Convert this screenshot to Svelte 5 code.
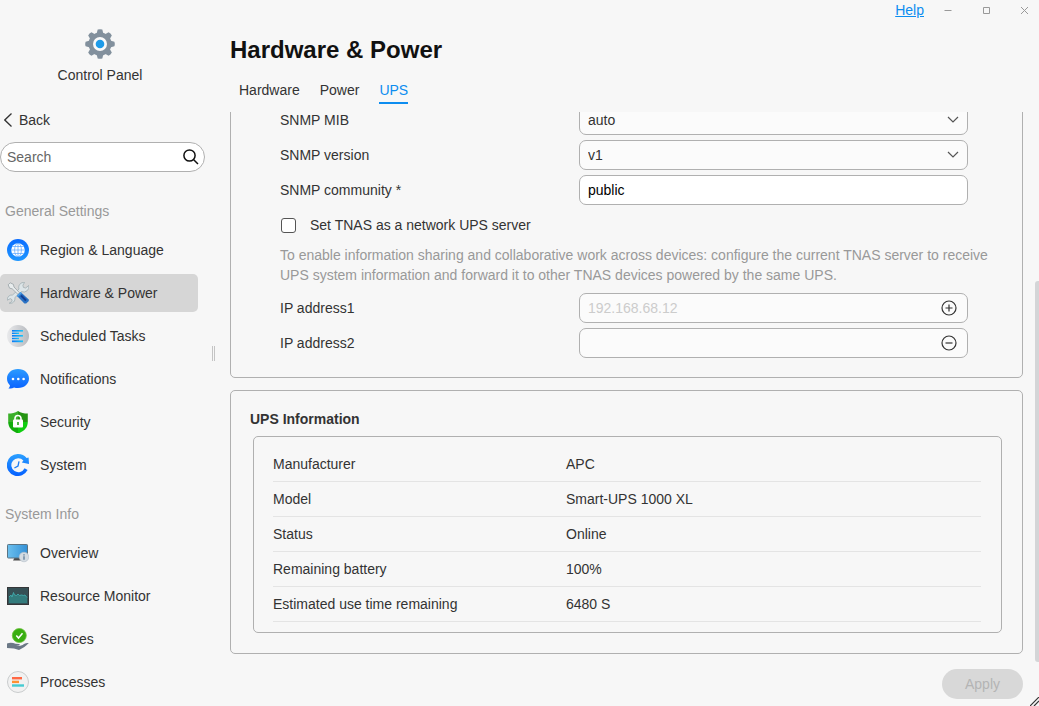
<script>
  let search = $state('')
  let activeItem = $state('Hardware & Power')
  let activeTab = $state('UPS')

  let mib = $state('auto')
  let version = $state('v1')
  let community = $state('public')
  let isServer = $state(false)
  let addresses = $state(['', ''])

  const tabs = ['Hardware', 'Power', 'UPS']

  const groups = [
    {
      title: 'General Settings',
      items: [
        { name: 'Region & Language', icon: globe },
        { name: 'Hardware & Power', icon: tools },
        { name: 'Scheduled Tasks', icon: tasks },
        { name: 'Notifications', icon: bubble },
        { name: 'Security', icon: shield },
        { name: 'System', icon: clock },
      ],
    },
    {
      title: 'System Info',
      items: [
        { name: 'Overview', icon: monitor },
        { name: 'Resource Monitor', icon: chart },
        { name: 'Services', icon: hand },
        { name: 'Processes', icon: processes },
      ],
    },
  ]

  const upsInfo = [
    ['Manufacturer', 'APC'],
    ['Model', 'Smart-UPS 1000 XL'],
    ['Status', 'Online'],
    ['Remaining battery', '100%'],
    ['Estimated use time remaining', '6480 S'],
  ]

  function addAddress() {
    addresses.push('')
  }

  function removeAddress(i) {
    addresses.splice(i, 1)
  }
</script>

{#snippet globe()}
  <svg viewBox="0 0 22 22">
    <defs>
      <linearGradient id="globeBg" x1="0" y1="0" x2="0" y2="1">
        <stop offset="0" stop-color="#0a6cff" />
        <stop offset="1" stop-color="#1f97ff" />
      </linearGradient>
    </defs>
    <circle cx="11" cy="11" r="11" fill="url(#globeBg)" />
    <circle cx="11" cy="11" r="6.8" fill="#fff" />
    <g fill="none" stroke="#5aa5ff" stroke-width="0.7">
      <ellipse cx="11" cy="11" rx="3.4" ry="6.8" />
      <path d="M11 4.200v13.600M4.200 11h13.600M5.200 7.500h11.600M5.200 14.500h11.600" />
    </g>
  </svg>
{/snippet}

{#snippet tools()}
  <svg viewBox="0 0 22 22">
    <path d="M17.5 0.5a5 5 0 0 0-5.500 6.600l-6.500 5.900a4.600 4.600 0 0 0-5.200 5.200l3-1.600 1.800 1.200-.2 1.800-2.700 1.600a4.600 4.600 0 0 0 5.600-5.600l6.700-6a5.300 5.300 0 0 0 7.300-6.100l-3.200 2.500-2.200-.6-.5-2.200z" fill="#dde5e8" stroke="#9aa8ac" stroke-width="0.7" />
    <path d="M1.200 2.800l2-2 3.200 1.600.6 2.600 5.600 5.800-1.600 1.600-5.800-5.600-2.600-.6z" fill="#e8eced" stroke="#8f999d" stroke-width="0.7" />
    <path d="M9.800 13.800l3.800-3.800 8.200 7.400v1.600l-2.600 2.600h-1.800z" fill="#2a72c4" />
    <path d="M14 13.500l5 5" stroke="#123c91" stroke-width="2" />
    <path d="M9.800 13.800l3.800-3.800 1.200 1-3.900 4z" fill="#4ea1e8" />
  </svg>
{/snippet}

{#snippet tasks()}
  <svg viewBox="0 0 22 22">
    <defs>
      <linearGradient id="taskBg">
        <stop offset="0" stop-color="#e9eaec" />
        <stop offset="1" stop-color="#b7babf" />
      </linearGradient>
      <linearGradient id="taskLine">
        <stop offset="0" stop-color="#0b78f5" />
        <stop offset="1" stop-color="#19c6fa" />
      </linearGradient>
    </defs>
    <circle cx="11" cy="11" r="11" fill="url(#taskBg)" />
    <g fill="url(#taskLine)">
      <rect x="5" y="5" width="11" height="1.6" />
      <rect x="5" y="7.6" width="7" height="1.4" />
      <rect x="5" y="10" width="11" height="1.6" />
      <rect x="5" y="12.8" width="7" height="1.4" />
      <rect x="5" y="15.4" width="11" height="1.8" />
    </g>
  </svg>
{/snippet}

{#snippet bubble()}
  <svg viewBox="0 0 22 22">
    <defs>
      <linearGradient id="bubbleBg" x1="0" y1="0" x2="0" y2="1">
        <stop offset="0" stop-color="#2b9bff" />
        <stop offset="1" stop-color="#0a63ff" />
      </linearGradient>
    </defs>
    <path d="M11 1c6.5 0 11 4.2 11 9.500s-4.500 9.500-11 9.500c-1.500 0-2.700-.1-4-.5-1.500.9-3.600 1.300-5.600 1 1-.8 1.500-1.900 1.500-3.200C1 15.500 0 13.200 0 10.500 0 5.200 4.500 1 11 1z" fill="url(#bubbleBg)" />
    <g fill="#fff">
      <circle cx="6" cy="11" r="1.3" />
      <circle cx="11.3" cy="11" r="1.3" />
      <circle cx="16.6" cy="11" r="1.3" />
    </g>
  </svg>
{/snippet}

{#snippet shield()}
  <svg viewBox="0 0 22 22">
    <path d="M11 0c3 2 6 2.600 9.800 2.600V11H11z" fill="#259412" />
    <path d="M11 0C8 2 5 2.600 1.200 2.600V11H11z" fill="#3bb02a" />
    <path d="M1.200 11H11v11.500C5 20.500 1.200 16.500 1.200 11z" fill="#12ad0c" />
    <path d="M20.800 11H11v11.500c6-2 9.800-6 9.800-11.500z" fill="#10ce10" />
    <rect x="6" y="8.6" width="10" height="7.8" rx="1" fill="#fff" />
    <path d="M8 9V7.500a3 3 0 0 1 6 0V9" fill="none" stroke="#fff" stroke-width="1.6" />
    <path d="M11 11v3" stroke="#2aa51c" stroke-width="1.6" />
  </svg>
{/snippet}

{#snippet clock()}
  <svg viewBox="0 0 22 22">
    <defs>
      <linearGradient id="clockBg" x1="0" y1="0" x2="0" y2="1">
        <stop offset="0" stop-color="#2ba0ff" />
        <stop offset="1" stop-color="#0560ff" />
      </linearGradient>
    </defs>
    <path d="M11 0c3.600 0 6.600 1.500 8.600 4l2-.6.4 6.600-7.200-1.600 1.600-2A7 7 0 1 0 17.600 14.300l3 1.700A11 11 0 1 1 11 0z" fill="url(#clockBg)" />
    <path d="M12 7.400l-1 4.600-3.600 2" fill="none" stroke="#1c7df5" stroke-width="1.3" />
  </svg>
{/snippet}

{#snippet monitor()}
  <svg viewBox="0 0 22 22">
    <defs>
      <linearGradient id="screenBg">
        <stop offset="0" stop-color="#6cc0ee" />
        <stop offset="1" stop-color="#3390d6" />
      </linearGradient>
    </defs>
    <path d="M8 15h6l.5 3.500H6z" fill="#4b4b4b" />
    <rect x="0.5" y="2.5" width="20" height="13.500" rx="0.8" fill="url(#screenBg)" stroke="#5b7382" />
    <circle cx="17" cy="15" r="4.8" fill="#d5dce2" stroke="#b3bdc7" stroke-width="0.6" />
    <path d="M17 12.300v1.200M17 14.200v3.600" stroke="#5d7b98" stroke-width="1.3" />
  </svg>
{/snippet}

{#snippet chart()}
  <svg viewBox="0 0 22 22">
    <rect x="0.5" y="2.5" width="21" height="17" fill="#365055" stroke="#353638" />
    <path d="M2 12l2-2 1 2 1.500-4.500 1 2.500 2 .5 1.500-1.500 1.500 1.500 2-.5 2 .5 1.500-.5 2 2.500V18H2z" fill="#337b7c" />
    <path d="M2 12l2-2 1 2 1.500-4.500 1 2.500 2 .5 1.500-1.500 1.500 1.500 2-.5 2 .5 1.500-.5 2 2.500" fill="none" stroke="#43b3b4" stroke-width="0.8" />
  </svg>
{/snippet}

{#snippet hand()}
  <svg viewBox="0 0 22 22">
    <path d="M0 15.500c3-1.200 6-.8 8.500.3l3.500.2c1 .2 1 1.200 0 1.500L9 18c3 .4 6-.4 8-2 1.500-1 3.500-1.300 4.800-1-2.500 3-6 5.200-9.800 7l-5-1.600L0 20z" fill="#6b7886" />
    <circle cx="12.300" cy="7.500" r="7" fill="#38ae10" stroke="#6dc13d" stroke-width="0.8" />
    <path d="M9.300 7.500l2.200 2.500 4-4.700" fill="none" stroke="#fff" stroke-width="1.5" />
  </svg>
{/snippet}

{#snippet processes()}
  <svg viewBox="0 0 22 22">
    <circle cx="11" cy="11" r="10.500" fill="#f1f1f1" stroke="#c9cccd" />
    <rect x="5" y="6" width="10" height="2.4" fill="#ff6844" />
    <rect x="5" y="9.700" width="7" height="2.4" fill="#ff9131" />
    <rect x="5" y="13.300" width="12" height="2.4" fill="#45cbd2" />
  </svg>
{/snippet}

<div class="window">
  <aside>
    <div class="app">
      <svg class="gear" viewBox="0 0 30 30">
        <g fill="#82909d">
          <circle cx="15" cy="15" r="11.5" />
          {#each [0, 45, 90, 135, 180, 225, 270, 315] as angle}
            <path d="M11.5 5l1.200-4.400q2.300-.8 4.600 0L18.500 5z" transform="rotate({angle} 15 15)" />
          {/each}
        </g>
        <circle cx="15" cy="15" r="7" fill="#fafafa" />
        <circle cx="15" cy="15" r="4.3" fill="#1e9be9" />
      </svg>
      <span>Control Panel</span>
    </div>

    <button type="button" class="back">
      <svg viewBox="0 0 8 14"><path d="M7.500 0.500L0.800 7l6.700 6.500" /></svg>
      Back
    </button>

    <div class="search">
      <input type="text" aria-label="Search" placeholder="Search" bind:value={search} />
      <button type="button" aria-label="Find">
        <svg viewBox="0 0 16 16"><circle cx="6.5" cy="6.5" r="5.6" /><path d="M10.500 10.500l4.500 4.500" /></svg>
      </button>
    </div>

    <nav>
      {#each groups as group}
        <h2>{group.title}</h2>
        <ul>
          {#each group.items as item}
            <li>
              <button type="button" class:active={activeItem === item.name} onclick={() => (activeItem = item.name)}>
                {@render item.icon()}
                {item.name}
              </button>
            </li>
          {/each}
        </ul>
      {/each}
    </nav>
  </aside>

  <div class="splitter"></div>

  <main>
    <div class="titlebar">
      <a href="#help">Help</a>
      <button type="button" aria-label="Minimize"><svg viewBox="0 0 10 10"><path d="M1.500 5.500h7" /></svg></button>
      <button type="button" aria-label="Maximize"><svg viewBox="0 0 10 10"><path d="M2.500 2.500h6v6h-6z" /></svg></button>
      <button type="button" aria-label="Close"><svg viewBox="0 0 10 10"><path d="M2 2l7 7M9 2l-7 7" /></svg></button>
    </div>

    <h1>Hardware &amp; Power</h1>

    <div class="tabs">
      {#each tabs as tab}
        <button type="button" class:active={activeTab === tab} onclick={() => (activeTab = tab)}>{tab}</button>
      {/each}
    </div>

    <div class="scroll">
      <section class="card form">
        <div class="row">
          <label for="mib">SNMP MIB</label>
          <div class="field">
            <select id="mib" bind:value={mib}>
              <option>auto</option>
            </select>
            <svg class="arrow" viewBox="0 0 12 8"><path d="M1 1l5 5 5-5" /></svg>
          </div>
        </div>
        <div class="row">
          <label for="version">SNMP version</label>
          <div class="field">
            <select id="version" bind:value={version}>
              <option>v1</option>
              <option>v3</option>
            </select>
            <svg class="arrow" viewBox="0 0 12 8"><path d="M1 1l5 5 5-5" /></svg>
          </div>
        </div>
        <div class="row">
          <label for="community">SNMP community *</label>
          <div class="field white">
            <input id="community" type="text" bind:value={community} />
          </div>
        </div>
        <label class="check">
          <input type="checkbox" bind:checked={isServer} />
          Set TNAS as a network UPS server
        </label>
        <p>
          To enable information sharing and collaborative work across devices: configure the current TNAS server to
          receive UPS system information and forward it to other TNAS devices powered by the same UPS.
        </p>
        {#each addresses as address, i}
          <div class="row">
            <label for="ip{i}">IP address{i + 1}</label>
            <div class="field">
              <input id="ip{i}" type="text" placeholder={i === 0 ? '192.168.68.12' : ''} bind:value={addresses[i]} />
              {#if i === 0}
                <button type="button" aria-label="Add address" onclick={addAddress}>
                  <svg viewBox="0 0 16 16"><circle cx="8" cy="8" r="7" /><path d="M4.500 8h7M8 4.500v7" /></svg>
                </button>
              {:else}
                <button type="button" aria-label="Remove address" onclick={() => removeAddress(i)}>
                  <svg viewBox="0 0 16 16"><circle cx="8" cy="8" r="7" /><path d="M4.500 8h7" /></svg>
                </button>
              {/if}
            </div>
          </div>
        {/each}
      </section>

      <section class="card info">
        <h3>UPS Information</h3>
        <div class="box">
          <table>
            <tbody>
              {#each upsInfo as [name, value]}
                <tr>
                  <th scope="row">{name}</th>
                  <td>{value}</td>
                </tr>
              {/each}
            </tbody>
          </table>
        </div>
      </section>
    </div>

    <footer>
      <button type="button" disabled>Apply</button>
    </footer>
  </main>

  <div class="thumb"></div>
  <svg class="grip" viewBox="0 0 9 9"><path d="M0 9L9 0M4 9l5-5" /></svg>
</div>

<style>
  * {
    box-sizing: border-box;
  }

  .window {
    position: relative;
    display: flex;
    height: 100vh;
    overflow: hidden;
    background: #f7f7f7;
    color: #333;
    font-family: 'Liberation Sans', Arial, sans-serif;
    font-size: 14px;
    line-height: 20px;
  }

  button,
  input,
  select {
    margin: 0;
    padding: 0;
    border: none;
    background: none;
    color: inherit;
    font: inherit;
  }
  button {
    cursor: pointer;
  }
  svg {
    display: block;
    flex: none;
  }
  h1,
  h2,
  h3,
  p,
  ul {
    margin: 0;
    padding: 0;
  }

  /* sidebar */
  aside {
    flex: none;
    width: 212px;
    padding-top: 29px;
  }
  .app {
    display: flex;
    flex-direction: column;
    align-items: center;
    gap: 6px;
    width: 200px;
  }
  .gear {
    width: 30px;
    height: 30px;
  }
  .back {
    display: flex;
    align-items: center;
    gap: 7px;
    margin: 25px 0 12px 4px;
  }
  .back svg {
    width: 8px;
    height: 14px;
    fill: none;
    stroke: #333;
    stroke-width: 1.3;
  }
  .search {
    display: flex;
    align-items: center;
    width: 205px;
    height: 30px;
    padding: 0 5px 0 6px;
    border: 1px solid #b0b0b0;
    border-radius: 15px;
    background: #fff;
  }
  .search input {
    flex: 1;
    min-width: 0;
    outline: none;
  }
  .search input::placeholder {
    color: #666;
    opacity: 1;
  }
  .search svg {
    width: 16px;
    height: 16px;
    fill: none;
    stroke: #111;
    stroke-width: 1.5;
  }

  nav {
    padding-top: 9px;
  }
  nav h2 {
    margin: 20px 0 10px 5px;
    color: #999;
    font-size: 14px;
    font-weight: normal;
  }
  nav ul {
    display: flex;
    flex-direction: column;
    gap: 5px;
    list-style: none;
  }
  nav button {
    display: flex;
    align-items: center;
    gap: 11px;
    width: 198px;
    height: 38px;
    padding-left: 7px;
    border-radius: 5px;
    text-align: left;
  }
  nav button.active {
    background: #d6d6d6;
  }
  nav svg {
    width: 22px;
    height: 22px;
  }

  .splitter {
    align-self: center;
    flex: none;
    width: 3px;
    height: 15px;
    border: solid #c4c4c4;
    border-width: 0 1px;
  }

  /* content */
  main {
    flex: 1;
    display: flex;
    flex-direction: column;
    min-width: 0;
    padding: 0 16px 7px 15px;
  }
  .titlebar {
    display: flex;
    align-items: center;
    justify-content: flex-end;
    gap: 28px;
    height: 20px;
    margin-right: -6px;
  }
  .titlebar a {
    margin-right: -9px;
    color: #0d8df0;
  }
  .titlebar svg {
    width: 10px;
    height: 10px;
    fill: none;
    stroke: #999;
  }
  h1 {
    margin: 15px 0;
    color: #111;
    font-size: 24px;
    line-height: 30px;
  }
  .tabs {
    display: flex;
    gap: 20px;
    padding-left: 9px;
  }
  .tabs button {
    height: 24px;
    padding-bottom: 4px;
    border-bottom: 2px solid transparent;
  }
  .tabs button.active {
    border-color: #0d8df0;
    color: #0d8df0;
  }

  /* kept scrolled to its end */
  .scroll {
    flex: 1;
    display: flex;
    flex-direction: column;
    justify-content: flex-end;
    gap: 12px;
    min-height: 0;
    margin-top: 8px;
    padding-bottom: 8px;
    overflow: hidden;
  }
  .card {
    flex: none;
    border: 1px solid #b0b0b0;
    border-radius: 5px;
  }
  .form {
    display: flex;
    flex-direction: column;
    gap: 5px;
    padding: 19px 54px 19px 49px;
  }
  .row {
    display: flex;
    align-items: center;
  }
  .row label {
    flex: none;
    width: 299px;
  }
  .field {
    position: relative;
    flex: 1;
    display: flex;
    align-items: center;
    height: 30px;
    padding: 0 10px 0 8px;
    border: 1px solid #b0b0b0;
    border-radius: 7px;
    background: #fbfbfb;
  }
  .field.white {
    background: #fff;
    color: #000;
  }
  .field input,
  .field select {
    flex: 1;
    min-width: 0;
    height: 28px;
    outline: none;
    appearance: none;
  }
  .field input::placeholder {
    color: #ccc;
    opacity: 1;
  }
  .field svg {
    width: 16px;
    height: 16px;
    fill: none;
    stroke: #333;
    stroke-width: 1.2;
  }
  .field .arrow {
    position: absolute;
    right: 8px;
    width: 12px;
    height: 8px;
    stroke: #555;
    pointer-events: none;
  }
  .check {
    display: flex;
    align-items: center;
    gap: 14px;
    height: 30px;
    padding-left: 1px;
  }
  .check input {
    appearance: none;
    width: 15px;
    height: 15px;
    border: 1px solid #555;
    border-radius: 3px;
    background: #fff;
  }
  .check input:checked {
    background: #0d8df0;
  }
  .form p {
    margin: 0 -30px 3px 0;
    color: #999;
  }

  .info {
    padding: 18px 20px 20px 19px;
  }
  h3 {
    font-size: 14px;
  }
  .box {
    margin: 7px 0 0 3px;
    padding: 10px 20px 10px 19px;
    border: 1px solid #b0b0b0;
    border-radius: 5px;
  }
  table {
    width: 100%;
    border-collapse: separate;
    border-spacing: 0;
    table-layout: fixed;
  }
  th,
  td {
    height: 35px;
    padding: 0;
    border-bottom: 1px solid #e4e4e4;
    font-weight: normal;
    text-align: left;
  }
  th {
    width: 293px;
  }

  footer {
    display: flex;
    justify-content: flex-end;
    margin-top: 7px;
  }
  footer button {
    width: 81px;
    height: 30px;
    border-radius: 15px;
    background: #d8d8d8;
    color: #b4b4b4;
    cursor: default;
  }

  .thumb {
    position: absolute;
    top: 281px;
    right: 0;
    width: 4px;
    height: 381px;
    border-radius: 3px 0 0 3px;
    background: #d4d5d7;
  }
  .grip {
    position: absolute;
    right: 0;
    bottom: 0;
    width: 9px;
    height: 9px;
    stroke: #333;
    stroke-width: 1.2;
  }
</style>
